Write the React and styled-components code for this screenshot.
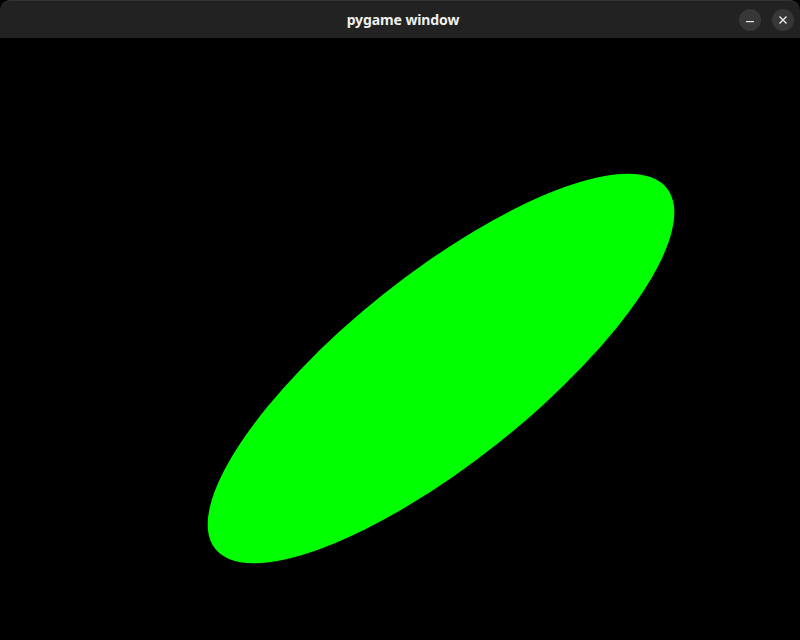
import React from "react";
import styled, { createGlobalStyle } from "styled-components";

const Global = createGlobalStyle`
  html, body { margin: 0; padding: 0; background: #000; }
  body { width: 800px; height: 640px; overflow: hidden; }
`;

const Window = styled.div`
  width: 800px;
  height: 640px;
  display: flex;
  flex-direction: column;
  background: #000;
`;

const TitleBar = styled.div`
  height: 38px;
  flex: 0 0 38px;
  box-sizing: border-box;
  background: #222222;
  border-radius: 10px 10px 0 0;
  border-top: 1px solid #333;
  display: grid;
  grid-template-columns: 1fr auto 1fr;
  align-items: center;
  padding: 0 6px 0 12px;
`;

const Title = styled.div`
  grid-column: 2;
  color: #f0f0f0;
  font-family: "Noto Sans", "DejaVu Sans", sans-serif;
  font-weight: 700;
  font-size: 14px;
  letter-spacing: -0.1px;
`;

const Controls = styled.div`
  grid-column: 3;
  justify-self: end;
  display: flex;
  gap: 11px;
  align-items: center;
`;

const CtrlButton = styled.div`
  width: 22px;
  height: 22px;
  border-radius: 50%;
  background: #373737;
  display: flex;
  align-items: center;
  justify-content: center;
`;

const Canvas = styled.div`
  flex: 1;
  background: #000;
  position: relative;
`;

const Surface = styled.svg`
  display: block;
  width: 800px;
  height: 602px;
`;

export default function App() {
  return (
    <>
      <Global />
      <Window>
        <TitleBar>
          <Title>pygame window</Title>
          <Controls>
            <CtrlButton>
              <svg width="10" height="10" viewBox="0 0 10 10">
                <rect x="1" y="6" width="8" height="1.2" fill="#ececec" />
              </svg>
            </CtrlButton>
            <CtrlButton>
              <svg width="10" height="10" viewBox="0 0 10 10">
                <path d="M1.5 1.5 L8.5 8.5 M8.5 1.5 L1.5 8.5" stroke="#ececec" strokeWidth="1.4" />
              </svg>
            </CtrlButton>
          </Controls>
        </TitleBar>
        <Canvas>
          <Surface viewBox="0 0 800 602">
            <ellipse
              cx="441"
              cy="330.5"
              rx="289"
              ry="94"
              fill="#00ff00"
              transform="rotate(-38.6 441 330.5)"
            />
          </Surface>
        </Canvas>
      </Window>
    </>
  );
}
